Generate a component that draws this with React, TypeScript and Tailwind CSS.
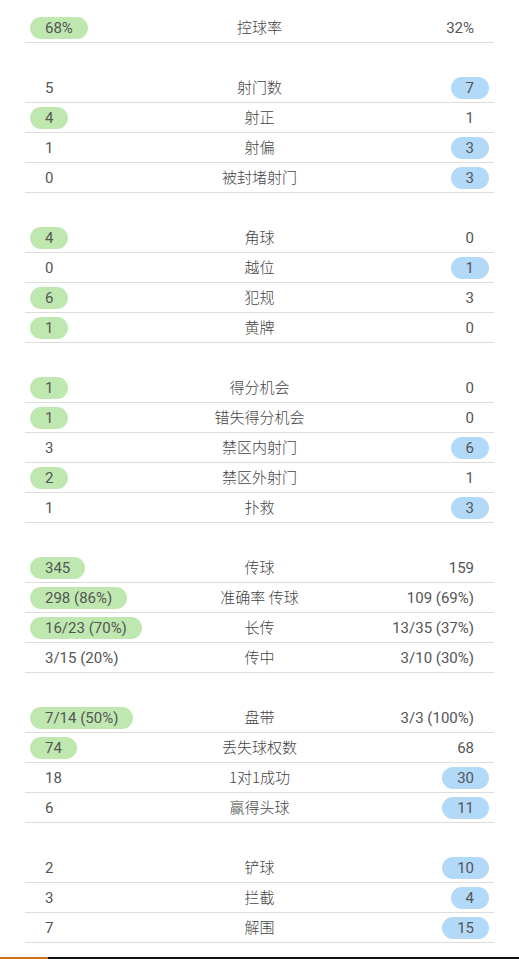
import React from "react";

type Row = { l: string; label: string; r: string; hl?: "l" | "r" };

const groups: Row[][] = [
  [{ l: "68%", label: "控球率", r: "32%", hl: "l" }],
  [
    { l: "5", label: "射门数", r: "7", hl: "r" },
    { l: "4", label: "射正", r: "1", hl: "l" },
    { l: "1", label: "射偏", r: "3", hl: "r" },
    { l: "0", label: "被封堵射门", r: "3", hl: "r" },
  ],
  [
    { l: "4", label: "角球", r: "0", hl: "l" },
    { l: "0", label: "越位", r: "1", hl: "r" },
    { l: "6", label: "犯规", r: "3", hl: "l" },
    { l: "1", label: "黄牌", r: "0", hl: "l" },
  ],
  [
    { l: "1", label: "得分机会", r: "0", hl: "l" },
    { l: "1", label: "错失得分机会", r: "0", hl: "l" },
    { l: "3", label: "禁区内射门", r: "6", hl: "r" },
    { l: "2", label: "禁区外射门", r: "1", hl: "l" },
    { l: "1", label: "扑救", r: "3", hl: "r" },
  ],
  [
    { l: "345", label: "传球", r: "159", hl: "l" },
    { l: "298 (86%)", label: "准确率 传球", r: "109 (69%)", hl: "l" },
    { l: "16/23 (70%)", label: "长传", r: "13/35 (37%)", hl: "l" },
    { l: "3/15 (20%)", label: "传中", r: "3/10 (30%)" },
  ],
  [
    { l: "7/14 (50%)", label: "盘带", r: "3/3 (100%)", hl: "l" },
    { l: "74", label: "丢失球权数", r: "68", hl: "l" },
    { l: "18", label: "1对1成功", r: "30", hl: "r" },
    { l: "6", label: "赢得头球", r: "11", hl: "r" },
  ],
  [
    { l: "2", label: "铲球", r: "10", hl: "r" },
    { l: "3", label: "拦截", r: "4", hl: "r" },
    { l: "7", label: "解围", r: "15", hl: "r" },
  ],
];

const num = { fontFamily: "Roboto, 'Noto Sans CJK SC', sans-serif" };
const cjk = { fontFamily: "'Noto Sans CJK SC', 'Noto Sans', sans-serif" };

function Val({ v, hl, side }: { v: string; hl: boolean; side: "l" | "r" }) {
  const color = side === "l" ? "bg-[#bfe8b1]" : "bg-[#b3d9f8]";
  return (
    <span
      style={num}
      className={`inline-block h-[22px] leading-[22px] rounded-full px-[15px] text-[15px] text-[#555] ${
        hl ? color : ""
      }`}
    >
      {v}
    </span>
  );
}

export default function App() {
  return (
    <div className="w-[519px] h-[959px] bg-white relative overflow-hidden">
      <div className="mx-[25px] pt-[13px] flex flex-col gap-[30px]">
        {groups.map((g, gi) => (
          <div key={gi} className="flex flex-col">
            {g.map((row, ri) => (
              <div
                key={ri}
                className="h-[30px] border-b border-[#dddddd] grid grid-cols-[1fr_auto_1fr] items-center px-[5px]"
              >
                <div className="flex justify-start">
                  <Val v={row.l} hl={row.hl === "l"} side="l" />
                </div>
                <div style={cjk} className="text-[15px] font-light text-[#444] text-center">
                  {row.label}
                </div>
                <div className="flex justify-end">
                  <Val v={row.r} hl={row.hl === "r"} side="r" />
                </div>
              </div>
            ))}
          </div>
        ))}
      </div>
      <div className="absolute left-0 right-0 bottom-0 h-[2px] bg-[#111] flex">
        <div className="w-[48px] h-full bg-[#c8741e]" />
      </div>
    </div>
  );
}
